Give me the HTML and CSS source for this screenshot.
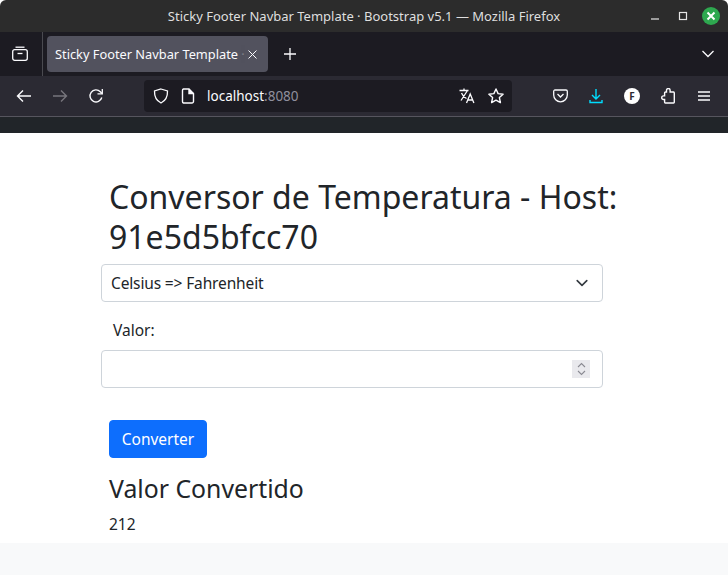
FILE: index.html
```html
<!DOCTYPE html>
<html lang="pt">
<head>
<meta charset="utf-8">
<title>Sticky Footer Navbar Template · Bootstrap v5.1</title>
<link rel="stylesheet" href="styles.css">
</head>
<body>
<div class="window">
  <header class="titlebar">
    <span class="title">Sticky Footer Navbar Template · Bootstrap v5.1 — Mozilla Firefox</span>
    <div class="wm">
      <svg class="wm-min" width="10" height="10" viewBox="0 0 10 10"><path d="M1 8h8" stroke="#e6e6e6" stroke-width="1.2"/></svg>
      <svg class="wm-max" width="10" height="10" viewBox="0 0 10 10"><rect x="1.5" y="1.5" width="7" height="7" fill="none" stroke="#e6e6e6" stroke-width="1.2"/></svg>
      <span class="wm-close"><svg width="18" height="18" viewBox="0 0 18 18"><path d="M5.5 5.5l7 7M12.5 5.5l-7 7" stroke="#fff" stroke-width="2"/></svg></span>
    </div>
  </header>
  <div class="tabbar">
    <div class="tabview">
      <svg width="16" height="16" viewBox="0 0 16 16" fill="none" stroke="#fbfbfe" stroke-width="1.3"><path d="M3.5 1.2h9"/><rect x="0.7" y="3.7" width="14.6" height="10.6" rx="2"/><path d="M5.5 7.5h5"/></svg>
    </div>
    <div class="tab">
      <span class="tab-label">Sticky Footer Navbar Template <span class="tab-fade">·</span></span>
      <svg class="tab-x" width="9" height="9" viewBox="0 0 9 9"><path d="M.5.5l8 8M8.500.5l-8 8" stroke="#fbfbfe" stroke-width="1"/></svg>
    </div>
    <svg class="newtab" width="12" height="12" viewBox="0 0 12 12"><path d="M6 0v12M0 6h12" stroke="#fbfbfe" stroke-width="1.3"/></svg>
    <svg class="tablist" width="12" height="8" viewBox="0 0 12 8"><path d="M0.5 1l5.500 5.500L11.500 1" fill="none" stroke="#fbfbfe" stroke-width="1.3"/></svg>
  </div>
  <nav class="toolbar">
    <div class="nav-btns">
      <svg width="16" height="16" viewBox="0 0 16 16" fill="none" stroke="#fbfbfe" stroke-width="1.4"><path d="M15 8H1.500M7 2.500L1.500 8 7 13.500"/></svg>
      <svg width="16" height="16" viewBox="0 0 16 16" fill="none" stroke="#77767d" stroke-width="1.4"><path d="M1 8h13.500M9 2.500L14.500 8 9 13.500"/></svg>
      <svg width="16" height="16" viewBox="0 0 16 16" fill="none" stroke="#fbfbfe" stroke-width="1.4"><path d="M13.800 9.500A6 6 0 1 1 12.300 3.700L14 5.500"/><path d="M14.300 1v4.800H9.500" stroke-width="1.300"/></svg>
    </div>
    <div class="urlbar">
      <svg class="u-shield" width="16" height="16" viewBox="0 0 16 16" fill="none" stroke="#fbfbfe" stroke-width="1.3"><path d="M8 1l6.500 2c.2 5.500-1.500 9.500-6.500 12C3 12.500 1.300 8.500 1.500 3z"/></svg>
      <svg class="u-page" width="14" height="16" viewBox="0 0 14 16" fill="none" stroke="#fbfbfe" stroke-width="1.4"><path d="M2.500 1h5.500l4.500 4.500v8a1.500 1.500 0 0 1-1.500 1.500h-8.500a1.500 1.500 0 0 1-1-1.500v-11a1.500 1.500 0 0 1 1-1.500z"/><path d="M8 1v4.500h4.500" fill="#fbfbfe"/></svg>
      <span class="url">localhost<span class="port">:8080</span></span>
      <svg class="u-trans" width="17" height="16" viewBox="0 0 17 16" fill="none" stroke="#fbfbfe" stroke-width="1.3"><path d="M0.500 2.500h9M5 0.500v2M2 12.500L8.500 2.500M2.500 5c1 2.500 3 4.500 5 5.500M7.500 15l3.700-9 3.700 9M8.800 12h4.800"/></svg>
      <svg class="u-star" width="16" height="16" viewBox="0 0 16 16" fill="none" stroke="#fbfbfe" stroke-width="1.4" stroke-linejoin="round"><path d="M8 1l2.100 4.600 5 .6-3.700 3.400 1 5L8 12.100l-4.400 2.500 1-5L.9 6.200l5-.6z"/></svg>
    </div>
    <div class="tools">
      <svg width="15" height="14" viewBox="0 0 15 14" fill="none" stroke="#fbfbfe" stroke-width="1.3"><path d="M2 1h11a1.300 1.300 0 0 1 1.300 1.300V6a6.800 6.800 0 0 1-13.600 0V2.300A1.300 1.300 0 0 1 2 1z"/><path d="M4.500 5l3 3 3-3"/></svg>
      <svg width="14" height="15" viewBox="0 0 14 15" fill="none" stroke="#00ddff" stroke-width="1.4"><path d="M7 0v9.500M3 6l4 4 4-4M1 11v2.500h12V11" /></svg>
      <span class="avatar">F</span>
      <svg width="14" height="16" viewBox="0 0 14 16" fill="none" stroke="#fbfbfe" stroke-width="1.400"><path d="M5.500 3V2.300a1.800 1.800 0 0 1 3.600 0V4h3.400a1 1 0 0 1 .8 1v9.300a.7.7 0 0 1-.7.700H4.300a.7.7 0 0 1-.7-.7v-2.800H2.500a1.800 1.800 0 0 1 0-3.600h1.100V5a1 1 0 0 1 1-1h.9z"/></svg>
      <svg class="menu" width="12" height="10" viewBox="0 0 12 10" stroke="#fbfbfe" stroke-width="1.300"><path d="M0 1h12M0 5h12M0 9h12"/></svg>
    </div>
  </nav>
  <div class="navbar-strip"></div>
  <main class="page">
    <h1 class="heading">Conversor de Temperatura - Host: 91e5d5bfcc70</h1>
    <div class="select">
      <span>Celsius =&gt; Fahrenheit</span>
      <svg width="16" height="16" viewBox="0 0 16 16" fill="none" stroke="#343a40" stroke-width="2" stroke-linecap="round" stroke-linejoin="round"><path d="M2 5l6 6 6-6" transform="translate(1.600 1.600) scale(.8)"/></svg>
    </div>
    <label class="label">Valor:</label>
    <div class="input">
      <span class="spin">
        <svg width="9" height="14" viewBox="0 0 9 14" fill="none" stroke="#8a8a92" stroke-width="1.100"><path d="M1 5l3.500-3.500L8 5M1 9l3.500 3.500L8 9"/></svg>
      </span>
    </div>
    <button class="btn" type="button">Converter</button>
    <h3 class="result-title">Valor Convertido</h3>
    <p class="result">212</p>
  </main>
  <footer class="footer"></footer>
</div>
</body>
</html>
```
FILE: styles.css
```css
* { box-sizing: border-box; }
html, body { margin: 0; padding: 0; background: #fff; }
body { font-family: "Noto Sans", "Open Sans", sans-serif; overflow: hidden; }
.window { width: 728px; height: 575px; display: flex; flex-direction: column; overflow: hidden; }

.titlebar { height: 32px; background: #2c2c2c; display: flex; align-items: center; justify-content: center; position: relative; border-radius: 6px 6px 0 0; flex: none; }
.title { color: #dfdfdf; font-size: 13px; }
.wm { position: absolute; right: 8px; top: 7px; display: flex; align-items: center; }
.wm-min { margin-right: 18px; }
.wm-max { margin-right: 14px; }
.wm-close { width: 18px; height: 18px; border-radius: 50%; background: #2ea84f; display: flex; }

.tabbar { height: 44px; background: #1c1b22; display: flex; align-items: center; flex: none; }
.tabview { width: 43px; height: 44px; border-right: 1px solid #4a4a50; display: flex; align-items: center; justify-content: center; padding-right: 3px; }
.tab { margin-left: 4px; width: 221px; height: 36px; background: #52525e; border-radius: 4px; display: flex; align-items: center; padding-left: 8px; color: #fbfbfe; font-size: 12.800px; overflow: hidden; }
.tab-label { width: 193px; white-space: nowrap; overflow: hidden; flex: none; }
.tab-fade { opacity: .25; }
.tab-x { flex: none; }
.newtab { margin-left: 16px; }
.tablist { margin-left: auto; margin-right: 14px; }

.toolbar { height: 41px; background: #2b2a33; border-bottom: 1px solid #56555e; display: flex; align-items: center; flex: none; }
.nav-btns { display: flex; gap: 20px; padding-left: 16px; width: 144px; }
.urlbar { width: 368px; height: 32px; background: #1c1b22; border-radius: 4px; display: flex; align-items: center; padding-left: 9px; }
.u-page { margin-left: 12px; }
.url { margin-left: 12px; font-size: 13.500px; color: #fbfbfe; }
.port { color: #8f8f9d; }
.u-trans { margin-left: auto; }
.u-star { margin-left: 12px; margin-right: 8px; }
.tools { display: flex; align-items: center; gap: 21px; margin-left: 41px; }
.menu { margin-left: 2px; }
.avatar { width: 16px; height: 16px; border-radius: 50%; background: #fff; color: #2b2a33; font-size: 10px; font-weight: 700; display: flex; align-items: center; justify-content: center; }

.navbar-strip { height: 16px; background: #212529; flex: none; }

.page { flex: 1; background: #fff; color: #212529; padding: 44px 125px 0 101px; min-height: 0; }
.heading { margin: 0 0 7px; padding-left: 8px; font-size: 32px; font-weight: 400; line-height: 40px; width: 530px; }
.select { height: 38px; border: 1px solid #ced4da; border-radius: 4px; display: flex; align-items: center; justify-content: space-between; padding: 0 12px 0 9px; font-size: 15.500px; letter-spacing: -0.14px; }
.label { display: block; margin-top: 18px; padding-left: 12px; font-size: 15.500px; line-height: 21px; }
.input { height: 38px; margin-top: 9px; border: 1px solid #ced4da; border-radius: 4px; display: flex; align-items: center; justify-content: flex-end; padding-right: 12px; }
.spin { width: 18px; height: 18px; background: #e9e9ed; display: flex; align-items: center; justify-content: center; }
.btn { display: block; margin: 32px 0 0 8px; width: 98px; height: 38px; background: #0d6efd; border: 1px solid #0d6efd; border-radius: 4px; color: #fff; font: inherit; font-size: 15.500px; padding: 0; }
.result-title { margin: 13px 0 0 8px; font-size: 24.800px; font-weight: 400; line-height: 34px; }
.result { margin: 7px 0 0 8px; font-size: 15.500px; line-height: 24px; }

.footer { height: 32px; background: #f8f9fa; flex: none; }
```
